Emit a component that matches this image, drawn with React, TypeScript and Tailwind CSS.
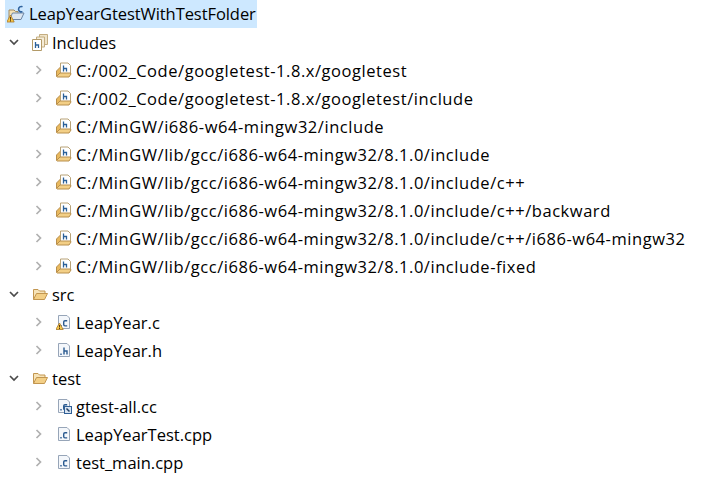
const PATHS = [
  'C:/002_Code/googletest-1.8.x/googletest',
  'C:/002_Code/googletest-1.8.x/googletest/include',
  'C:/MinGW/i686-w64-mingw32/include',
  'C:/MinGW/lib/gcc/i686-w64-mingw32/8.1.0/include',
  'C:/MinGW/lib/gcc/i686-w64-mingw32/8.1.0/include/c++',
  'C:/MinGW/lib/gcc/i686-w64-mingw32/8.1.0/include/c++/backward',
  'C:/MinGW/lib/gcc/i686-w64-mingw32/8.1.0/include/c++/i686-w64-mingw32',
  'C:/MinGW/lib/gcc/i686-w64-mingw32/8.1.0/include-fixed',
]

function Chevron({ open }: { open?: boolean }) {
  return (
    <svg width="10" height="10" viewBox="0 0 10 10" fill="none" className="shrink-0">
      {open ? (
        <path d="M1 3 L5 7 L9 3" stroke="#4b4b4b" strokeWidth="1.7" />
      ) : (
        <path d="M3.5 1 L7.5 5 L3.5 9" stroke="#b0b0b0" strokeWidth="1.7" />
      )}
    </svg>
  )
}

function Warning() {
  return (
    <g>
      <path d="M3.5 9 L7.2 15.5 L-0.2 15.5 Z" fill="#f7c948" stroke="#a9772b" strokeWidth="0.8" />
      <path d="M3.5 11 V13.5 M3.5 14 V15" stroke="#5a3a10" strokeWidth="1" />
    </g>
  )
}

function FolderIcon() {
  return (
    <svg width="16" height="16" viewBox="0 0 16 16" className="shrink-0">
      <path d="M1.5 13.5 V3.5 H6 L7.5 5 H13 V7.5" fill="#f6e3b8" stroke="#c29650" />
      <path d="M1.5 13.5 L4.5 7.5 H15.5 L12.5 13.5 Z" fill="#f3cf86" stroke="#c29650" />
    </svg>
  )
}

function ProjectIcon() {
  return (
    <svg width="18" height="18" viewBox="0 0 18 18" className="shrink-0">
      <path d="M2 14.5 V5 H7 L8.5 6.5 H11 V8" fill="#f6e3b8" stroke="#a08a60" />
      <path d="M2.5 14.5 L5.5 8 H17 L14 14.5 Z" fill="#dce6f0" stroke="#6f86a3" />
      <path d="M15.5 1.8 A2.7 2.7 0 1 0 15.5 6.6" fill="none" stroke="#2f639e" strokeWidth="1.6" />
      <path d="M3.5 10 L7.2 17 L-0.2 17 Z" fill="#f7c948" stroke="#a9772b" strokeWidth="0.8" />
      <path d="M3.5 12 V14.8 M3.5 15.2 V16.5" stroke="#5a3a10" strokeWidth="1" />
    </svg>
  )
}

function IncludesIcon() {
  return (
    <svg width="16" height="17" viewBox="0 0 16 17" className="shrink-0">
      <path d="M7.5 0.5 H15.5 V10.5 H7.5 Z" fill="#efe3c8" stroke="#c4ad80" />
      <path d="M4.5 3 H12.5 V13 H4.5 Z" fill="#f5ecd8" stroke="#c4ad80" />
      <path d="M0.5 5.5 H9.5 V16.5 H0.5 Z" fill="#ffffff" stroke="#b39a68" />
      <path d="M3.5 8 V14 M3.5 11 H6.5 V14" fill="none" stroke="#2a6099" strokeWidth="1.3" />
    </svg>
  )
}

function IncludePathIcon() {
  return (
    <svg width="16" height="16" viewBox="0 0 16 16" className="shrink-0">
      <path d="M0.5 14 V9 L4.5 5 V14 Z" fill="#e9b95e" stroke="#b88f4c" />
      <path d="M4.5 1 H12 L14.5 3.5 V12 H4.5 Z" fill="#ffffff" stroke="#b8a277" />
      <path d="M0.5 14.5 L4 11 H14.5 L15 12 L13 15 H1 Z" fill="#f3cf86" stroke="#b88f4c" />
      <path d="M7.5 3.5 V9.5 M7.5 6.5 H10.5 V9.5" fill="none" stroke="#2a6099" strokeWidth="1.3" />
    </svg>
  )
}

function FileIcon({ letter, warning, overlay }: { letter: string; warning?: boolean; overlay?: boolean }) {
  return (
    <svg width="16" height="16" viewBox="0 0 16 16" className="shrink-0">
      <path d="M2.5 1.5 H11 L13.5 4 V14.5 H2.5 Z" fill="#f4f7fb" stroke="#97a5b8" />
      {letter === 'h' ? (
        <path d="M5 11.5 V13 M8 5.5 V12.5 M8 9 H11 V12.5" fill="none" stroke="#2a5a90" strokeWidth="1.4" />
      ) : (
        <path d="M11.2 6.8 H9 Q7.7 6.8 7.7 8.1 V10.6 Q7.7 11.9 9 11.9 H11.2 M5 11 V12.5" fill="none" stroke="#2a5a90" strokeWidth="1.4" />
      )}
      {warning && <Warning />}
      {overlay && (
        <g>
          <rect x="8.5" y="8.5" width="7" height="7" fill="#d9e4f1" stroke="#2f5f96" />
          <path d="M10.5 10.5 L13.5 13.5" stroke="#1f3f66" strokeWidth="1.5" />
        </g>
      )}
    </svg>
  )
}

function Row({ top, open, icon, label, path }: { top?: boolean; open?: boolean; icon: React.ReactNode; label: string; path?: boolean }) {
  return (
    <div className={top ? 'flex h-7 items-center gap-[13px] pl-[9px]' : 'flex h-7 items-center gap-[13px] pl-[33px]'}>
      <Chevron open={open} />
      <div className="flex items-center gap-1">
        {icon}
        <span className={path ? 'whitespace-pre pt-0.5 tracking-[0.55px] text-black' : 'whitespace-pre pt-0.5 text-black'}>{label}</span>
      </div>
    </div>
  )
}

export default function App() {
  return (
    <div className="h-[484px] w-[711px] overflow-hidden bg-white font-['Open_Sans','Noto_Sans',sans-serif] text-[16.5px]">
      <div className="ml-[5px] flex h-7 w-[252px] items-center gap-1 bg-[#cde8ff] pl-0.5">
        <ProjectIcon />
        <span className="tracking-[-0.07px] text-black">LeapYearGtestWithTestFolder</span>
      </div>
      <Row top open icon={<IncludesIcon />} label="Includes" />
      {PATHS.map((path) => (
        <Row key={path} path icon={<IncludePathIcon />} label={path} />
      ))}
      <Row top open icon={<FolderIcon />} label="src" />
      <Row icon={<FileIcon letter="c" warning />} label="LeapYear.c" />
      <Row icon={<FileIcon letter="h" />} label="LeapYear.h" />
      <Row top open icon={<FolderIcon />} label="test" />
      <Row icon={<FileIcon letter="c" overlay />} label="gtest-all.cc" />
      <Row icon={<FileIcon letter="c" />} label="LeapYearTest.cpp" />
      <Row icon={<FileIcon letter="c" />} label="test_main.cpp" />
    </div>
  )
}
